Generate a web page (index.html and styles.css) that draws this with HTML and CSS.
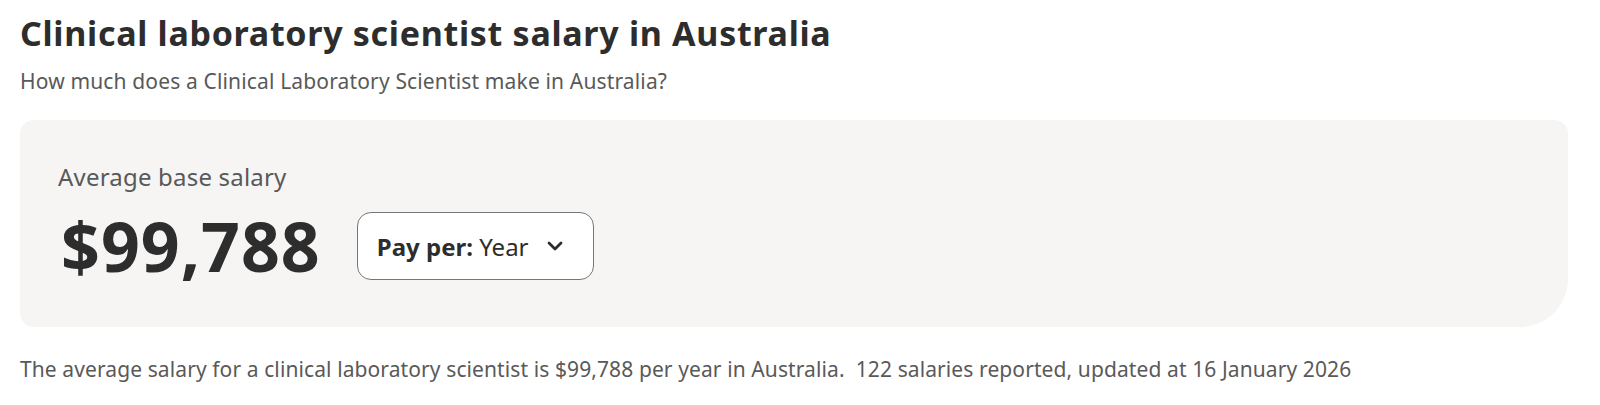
FILE: index.html
```html
<!DOCTYPE html>
<html lang="en">
<head>
  <meta charset="UTF-8" />
  <title>Clinical laboratory scientist salary in Australia</title>
  <link rel="stylesheet" href="styles.css">
</head>
<body>
  <h1>Clinical laboratory scientist salary in Australia</h1>
  <p class="subtitle">How much does a Clinical Laboratory Scientist make in Australia?</p>

  <div class="salary-card">
    <div class="salary-label">Average base salary</div>
    <div class="salary-row">
      <span class="salary-amount">$99,788</span>
      <button class="pay-per">
        <b>Pay per:</b>&nbsp;Year
        <svg width="16" height="10" viewBox="0 0 16 10" fill="none" stroke="#2d2d2d" stroke-width="2.8" stroke-linecap="round" stroke-linejoin="round"><path d="M2 2l6 6 6-6"/></svg>
      </button>
    </div>
  </div>

  <p class="summary">The average salary for a clinical laboratory scientist is $99,788 per year in Australia.&nbsp; 122 salaries reported, updated at 16 January 2026</p>
</body>
</html>
```

FILE: styles.css
```css
body {
  margin: 0;
  padding: 0 32px 0 20px;
  font-family: 'Noto Sans', 'Open Sans', sans-serif;
  color: #2d2d2d;
  background: #fff;
}
h1 {
  font-size: 34px;
  line-height: 42px;
  font-weight: 700;
  margin: 12px 0 0;
  letter-spacing: 0.7px;
}
.subtitle {
  font-size: 21px;
  line-height: 28px;
  color: #595959;
  margin: 13px 0 0;
  letter-spacing: 0.15px;
}
.salary-card {
  background: #f6f5f4;
  border-radius: 14px 14px 48px 14px;
  margin-top: 25px;
  padding: 41px 38px 47px;
}
.salary-label {
  font-size: 24px;
  line-height: 32px;
  color: #595959;
  letter-spacing: 0.2px;
}
.salary-row {
  display: flex;
  align-items: center;
  gap: 36px;
  margin-top: 19px;
}
.salary-amount {
  font-size: 68px;
  line-height: 68px;
  font-weight: 700;
  letter-spacing: 1px;
  margin-left: 3px;
}
.pay-per {
  display: flex;
  align-items: center;
  height: 68px;
  padding: 0 30px 0 19px;
  background: #fff;
  border: 1px solid #767676;
  border-radius: 14px;
  font-family: inherit;
  font-size: 24px;
  color: #2d2d2d;
}
.pay-per svg {
  margin-left: 18px;
}
.summary {
  font-size: 21px;
  line-height: 28px;
  color: #595959;
  margin: 28px 0 0;
  letter-spacing: 0.1px;
}
```
